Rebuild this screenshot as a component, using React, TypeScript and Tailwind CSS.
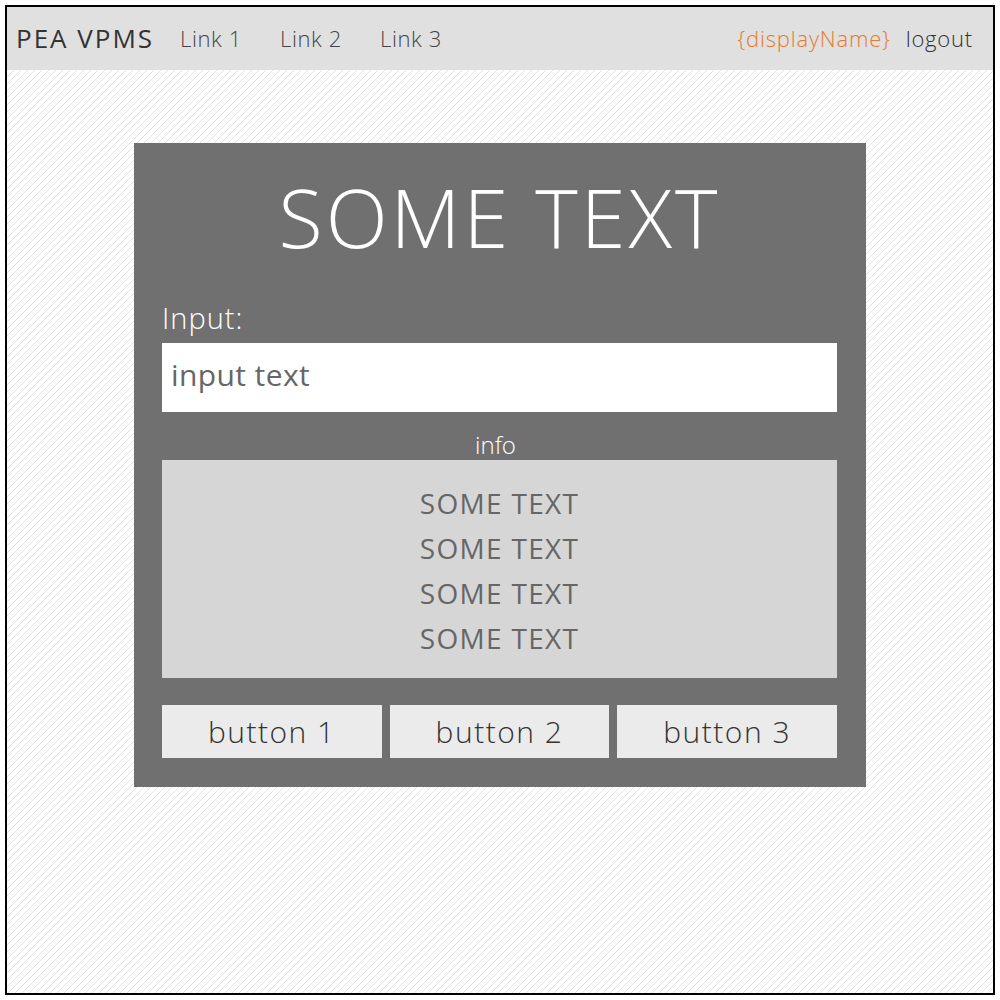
const LINKS = ['Link 1', 'Link 2', 'Link 3'];
const INFO_LINES = ['SOME TEXT', 'SOME TEXT', 'SOME TEXT', 'SOME TEXT'];
const BUTTONS = ['button 1', 'button 2', 'button 3'];

export default function App() {
  return (
    <div className="w-[1000px] h-[1000px] p-[5px] bg-white font-['Open_Sans',sans-serif]">
      <div className="h-full flex flex-col border-2 border-black">
        {/* Header */}
        <header className="h-[63px] flex-shrink-0 flex items-center bg-[#e0e0e0] pl-[9px] pr-[20px]">
          <span className="text-[26px] text-[#333] tracking-[2px]">PEA VPMS</span>
          <nav className="flex ml-[26px]">
            {LINKS.map((l) => (
              <a key={l} className="w-[100px] text-[22px] font-light text-[#444] tracking-[0.6px]">
                {l}
              </a>
            ))}
          </nav>
          <div className="ml-auto flex items-center gap-[15px]">
            <span className="text-[22px] font-light text-[#e8782a] tracking-[0.8px]">{'{displayName}'}</span>
            <a className="text-[22px] font-light text-[#333] tracking-[0.8px]">logout</a>
          </div>
        </header>

        {/* Body */}
        <main className="flex-1 bg-[length:7px_7px] bg-[linear-gradient(135deg,#e4e4e4_0%,#e4e4e4_5%,#ffffff_5%,#ffffff_45%,#e4e4e4_45%,#e4e4e4_55%,#ffffff_55%,#ffffff_95%,#e4e4e4_95%)]">
          <div className="mx-auto mt-[73px] w-[732px] h-[644px] bg-[#707070] pl-[28px] pr-[29px] flex flex-col">
            <h1 className="mt-[33px] text-[81px] leading-none font-light text-white text-center tracking-[3px]">SOME TEXT</h1>

            <label className="mt-[46px] text-[29px] leading-none font-light text-white tracking-[1px]">Input:</label>
            <div className="mt-[11px] h-[69px] bg-white flex items-center px-[9px] pb-[6px]">
              <span className="text-[30px] text-[#666] tracking-[0.4px]">input text</span>
            </div>

            <p className="mt-[18px] pr-[8px] text-[24px] leading-[30px] font-light text-white text-center">info</p>
            <div className="h-[218px] bg-[#d6d6d6] pt-[21px] flex flex-col items-center">
              {INFO_LINES.map((t, i) => (
                <span key={i} className="text-[28px] leading-[45px] text-[#666] tracking-[1.3px]">
                  {t}
                </span>
              ))}
            </div>

            <div className="mt-[27px] grid grid-cols-3 gap-2">
              {BUTTONS.map((b) => (
                <button key={b} className="h-[53px] bg-[#ebebeb] text-[30px] font-light text-[#333] tracking-[1.5px]">
                  {b}
                </button>
              ))}
            </div>
          </div>
        </main>
      </div>
    </div>
  );
}
